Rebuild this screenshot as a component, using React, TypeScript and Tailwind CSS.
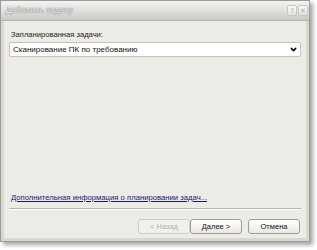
import { ChevronDown } from 'lucide-react';

export default function App() {
  return (
    <div className="w-[317px] h-[250px] bg-white" style={{ fontFamily: '"Liberation Sans", Arial, sans-serif' }}>
      <div className="w-[310px] h-[242px] flex flex-col border border-[#9d9b96] shadow-[3px_3px_4px_rgba(0,0,0,0.35)]">
        <TitleBar />
        <div className="flex-1 flex flex-col bg-[#ecebe5] border-x-[3px] border-b-[3px] border-[#d9d7d0] px-[5px]">
          <div className="mt-[9px] text-[7.6px] leading-[10px] text-[#222] pl-[2px]">Запланированная задачи:</div>
          <div className="mt-[2px] h-[15px] flex items-center justify-between bg-white border border-[#c4c2bb] rounded-[2px] pl-[3px] pr-[2px]">
            <span className="text-[8px] leading-[10px] text-[#111]">Сканирование ПК по требованию</span>
            <ChevronDown size={9} strokeWidth={4} className="text-black" />
          </div>
          <div className="flex-1" />
          <a className="text-[7.7px] leading-[10px] text-[#1b1b6e] underline pl-[2px]">
            Дополнительная информация о планировании задач...
          </a>
          <div className="mt-[5px] border-t border-[#b9b7b0] border-b border-b-white" />
          <div className="mt-[9px] mb-[4px] flex justify-end pr-[1px]">
            <Btn label="< Назад" disabled />
            <Btn label="Далее >" />
            <div className="w-[6px]" />
            <Btn label="Отмена" />
          </div>
        </div>
      </div>
    </div>
  );
}

function TitleBar() {
  return (
    <div className="h-[20px] flex items-center justify-between bg-gradient-to-b from-[#f3f3f2] via-[#e2e1de] to-[#cac8c3] border-b border-[#b5b3ad] pl-[5px] pr-[1px]">
      <span className="text-[8.5px] text-[#f4f4f4] [text-shadow:0_0_1px_#6f6f6f,0_0_1px_#6f6f6f]">Добавить задачу</span>
      <div className="flex gap-[1px]">
        <TitleBtn glyph="?" />
        <TitleBtn glyph="✕" />
      </div>
    </div>
  );
}

function TitleBtn({ glyph }: { glyph: string }) {
  return (
    <div className="w-[10px] h-[11px] flex items-center justify-center rounded-[2px] border border-[#c8c7c3] bg-gradient-to-b from-[#fbfbfa] to-[#e2e1dd] text-[7px] leading-none text-[#b0aea8]">
      {glyph}
    </div>
  );
}

function Btn({ label, disabled }: { label: string; disabled?: boolean }) {
  return (
    <div
      className={
        'w-[52px] h-[15px] flex items-center justify-center rounded-[3px] border text-[7.5px] ' +
        (disabled
          ? 'border-[#cfcdc6] bg-[#f1f0ec] text-[#b3b1aa]'
          : 'border-[#9f9d97] bg-gradient-to-b from-white to-[#e9e8e3] text-[#111]')
      }
    >
      {label}
    </div>
  );
}
